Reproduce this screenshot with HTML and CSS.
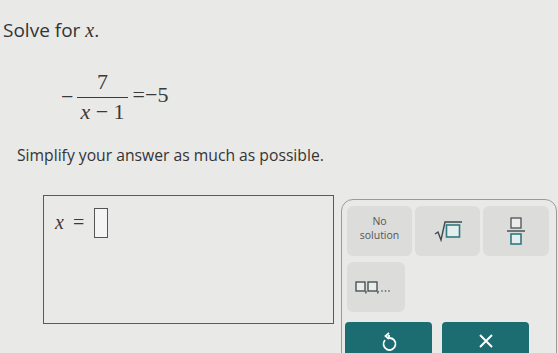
FILE: index.html
```html
<!DOCTYPE html>
<html lang="en">

<head>
    <meta charset="UTF-8">
    <meta name="viewport" content="width=device-width, initial-scale=1.0">
    <title>Solve for x</title>
    <link rel="stylesheet" href="styles.css">
</head>

<body>
    <div class="page">
        <p class="prompt">Solve for <span class="var">x</span>.</p>

        <div class="equation">
            <span class="minus">&minus;</span>
            <span class="frac">
                <span class="num">7</span>
                <span class="den"><span class="var">x</span> &minus; 1</span>
            </span>
            <span class="rhs">=&minus;5</span>
        </div>

        <p class="hint">Simplify your answer as much as possible.</p>

        <div class="work">
            <div class="answer-box">
                <span class="var">x</span>
                <span class="eq">=</span>
                <span class="slot"></span>
            </div>

            <div class="keypad">
                <div class="keys">
                    <button class="key key-text">No<br>solution</button>
                    <button class="key">
                        <svg width="30" height="22" viewBox="0 0 30 22">
                            <path d="M2 14 L5 12 L8 20 L12 2 L29 2" fill="none" stroke="#3d4a4c" stroke-width="1.4"/>
                            <rect x="13.5" y="5" width="13" height="12" fill="#e4eeee" stroke="#2f7a80" stroke-width="1.6"/>
                        </svg>
                    </button>
                    <button class="key">
                        <svg width="20" height="30" viewBox="0 0 20 30">
                            <rect x="5" y="2" width="10" height="10" fill="#ececec" stroke="#4a5456" stroke-width="1.3"/>
                            <line x1="1" y1="15" x2="19" y2="15" stroke="#3d4a4c" stroke-width="1.4"/>
                            <rect x="5" y="18" width="10" height="10" fill="#e4eeee" stroke="#2f7a80" stroke-width="1.6"/>
                        </svg>
                    </button>
                    <button class="key key-list">
                        <svg width="42" height="16" viewBox="0 0 42 16">
                            <rect x="1" y="3" width="9" height="9" fill="#ececec" stroke="#3d4a4c" stroke-width="1.3"/>
                            <rect x="13" y="3" width="9" height="9" fill="#ececec" stroke="#3d4a4c" stroke-width="1.3"/>
                            <path d="M11.3 12 L10.6 14.5" stroke="#3d4a4c" stroke-width="1.2"/>
                            <path d="M23.3 12 L22.6 14.5" stroke="#3d4a4c" stroke-width="1.2"/>
                            <circle cx="27" cy="12" r="0.8" fill="#3d4a4c"/>
                            <circle cx="30.5" cy="12" r="0.8" fill="#3d4a4c"/>
                            <circle cx="34" cy="12" r="0.8" fill="#3d4a4c"/>
                        </svg>
                    </button>
                </div>

                <div class="actions">
                    <button class="action">
                        <svg width="18" height="20" viewBox="0 0 18 20">
                            <path d="M5 8 A6 6 0 1 0 9 6 L9 3" fill="none" stroke="#fff" stroke-width="1.8"/>
                            <path d="M9 1 L5.5 4 L9 7" fill="none" stroke="#fff" stroke-width="1.8"/>
                        </svg>
                    </button>
                    <button class="action">
                        <svg width="18" height="18" viewBox="0 0 18 18">
                            <path d="M3 3 L15 15 M15 3 L3 15" stroke="#fff" stroke-width="2"/>
                        </svg>
                    </button>
                </div>
            </div>
        </div>
    </div>
</body>

</html>
```

FILE: styles.css
```css
body {
    margin: 0;
    background-color: #e9e9e8;
    font-family: 'Open Sans', 'DejaVu Sans', sans-serif;
    color: #343434;
    overflow: hidden;
}

.page {
    padding: 16px 0 0 3px;
}

.var,
.equation,
.answer-box {
    font-family: 'Liberation Serif', 'DejaVu Serif', 'Times New Roman', serif;
}

.var {
    font-style: italic;
}

.prompt {
    margin: 0;
    font-size: 19px;
    line-height: 28px;
}

.prompt .var {
    font-size: 20px;
}

.equation {
    display: flex;
    align-items: center;
    margin: 26px 0 0 58px;
    font-size: 22px;
    color: #3a3a3a;
}

.minus {
    margin-right: 1px;
}

.frac {
    display: inline-flex;
    flex-direction: column;
    align-items: center;
    padding: 0 3px;
}

.num {
    line-height: 23px;
    padding-bottom: 4px;
}

.den {
    border-top: 1.5px solid #3a3a3a;
    line-height: 23px;
    padding: 2px 3px 0;
}

.rhs {
    margin-left: 2px;
    margin-top: -4px;
}

.hint {
    margin: 20px 0 0 14px;
    font-size: 15.7px;
    line-height: 24px;
}

.work {
    display: flex;
    align-items: flex-start;
    margin-top: 28px;
}

.answer-box {
    margin: 0 0 0 40px;
    width: 291px;
    height: 129px;
    border: 1.5px solid #5a5a5a;
    box-sizing: border-box;
    display: flex;
    align-items: flex-start;
    padding: 12px 0 0 11px;
    font-size: 20px;
    color: #3a3a3a;
}

.answer-box .eq {
    margin: 0 10px 0 9px;
    line-height: 28px;
}

.answer-box .var {
    line-height: 28px;
}

.slot {
    width: 12px;
    height: 28px;
    border: 1.5px solid #555;
    background-color: #f4f4f4;
}

.keypad {
    margin: 4px 0 0 7px;
    width: 216px;
    height: 170px;
    border: 1px solid #9a9a9a;
    border-radius: 12px;
    box-sizing: border-box;
    padding: 6px 0 0 5px;
}

.keys {
    display: grid;
    grid-template-columns: 65px 65px 66px;
    grid-auto-rows: 50px;
    column-gap: 3px;
    row-gap: 6px;
}

.key {
    border: none;
    border-radius: 6px;
    background-color: #dcdcdb;
    display: flex;
    align-items: center;
    justify-content: center;
    padding: 0;
}

.key-text {
    font-family: 'Open Sans', sans-serif;
    font-size: 10.5px;
    line-height: 14px;
    color: #555;
    padding-bottom: 6px;
}

.key-list {
    width: 58px;
    justify-content: flex-start;
    padding-left: 8px;
}

.actions {
    display: flex;
    gap: 10px;
    margin-top: 10px;
    margin-left: -2px;
}

.action {
    width: 87px;
    height: 40px;
    border: none;
    border-radius: 4px;
    background-color: #1b6d72;
    display: flex;
    justify-content: center;
    padding-top: 10px;
}
```
